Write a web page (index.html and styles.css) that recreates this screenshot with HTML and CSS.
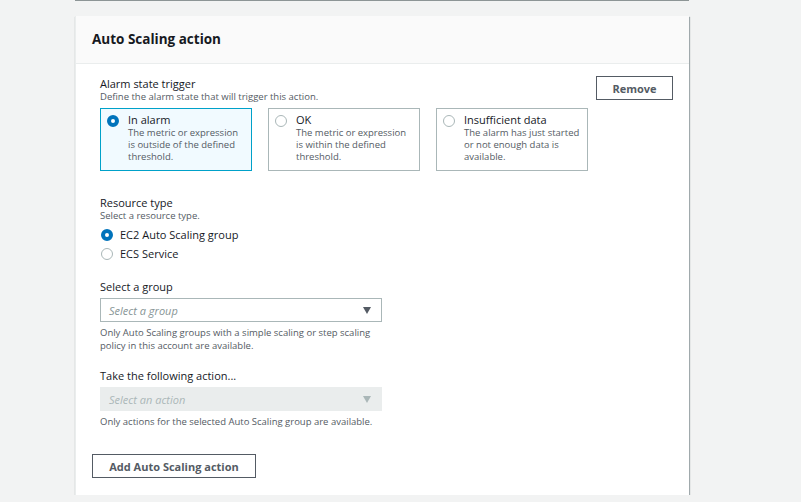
FILE: index.html
```html
<!DOCTYPE html>
<html lang="en">
<head>
<meta charset="utf-8">
<title>Auto Scaling action</title>
<link rel="stylesheet" href="styles.css">
</head>
<body>
<div class="page">
  <div class="prev-card"></div>
  <section class="card">
    <header class="card-head"><h2 class="card-title">Auto Scaling action</h2></header>
    <div class="card-body">
      <div class="top-row">
        <div class="field">
          <div class="label">Alarm state trigger</div>
          <div class="desc">Define the alarm state that will trigger this action.</div>
          <div class="tiles">
            <div class="tile selected">
              <span class="radio on"></span>
              <div class="tile-text">
                <div class="tile-title">In alarm</div>
                <div class="tile-desc">The metric or expression is outside of the defined threshold.</div>
              </div>
            </div>
            <div class="tile">
              <span class="radio"></span>
              <div class="tile-text">
                <div class="tile-title">OK</div>
                <div class="tile-desc">The metric or expression is within the defined threshold.</div>
              </div>
            </div>
            <div class="tile">
              <span class="radio"></span>
              <div class="tile-text">
                <div class="tile-title">Insufficient data</div>
                <div class="tile-desc">The alarm has just started or not enough data is available.</div>
              </div>
            </div>
          </div>
        </div>
        <button class="btn btn-remove">Remove</button>
      </div>

      <div class="field resource">
        <div class="label">Resource type</div>
        <div class="desc">Select a resource type.</div>
        <div class="radio-row first"><span class="radio on"></span><span class="radio-label">EC2 Auto Scaling group</span></div>
        <div class="radio-row"><span class="radio"></span><span class="radio-label">ECS Service</span></div>
      </div>

      <div class="field group">
        <div class="label">Select a group</div>
        <div class="select">
          <span class="placeholder">Select a group</span>
          <span class="caret"></span>
        </div>
        <div class="help">Only Auto Scaling groups with a simple scaling or step scaling policy in this account are available.</div>
      </div>

      <div class="field action">
        <div class="label">Take the following action...</div>
        <div class="select disabled">
          <span class="placeholder">Select an action</span>
          <span class="caret"></span>
        </div>
        <div class="help">Only actions for the selected Auto Scaling group are available.</div>
      </div>

      <button class="btn btn-add">Add Auto Scaling action</button>
    </div>
  </section>
</div>
</body>
</html>
```

FILE: styles.css
```css
* { box-sizing: border-box; }
html, body { margin: 0; padding: 0; }
body {
  background: #f2f3f3;
  font-family: "Open Sans", "Noto Sans", sans-serif;
  color: #16191f;
}
.page {
  width: 614px;
  margin-left: 75px;
}
.prev-card {
  height: 1px;
  background: #8d9596;
}
.card {
  margin-top: 15px;
  background: #fff;
  border-left: 1px solid #eaeded;
  box-shadow: 1px 1px 1px 0 rgba(0, 28, 36, 0.3), 0 1px 1px 0 rgba(0, 28, 36, 0.3);
}
.card-head {
  background: #fafafa;
  border-bottom: 1px solid #eaeded;
  height: 48px;
  padding: 0 16px 1px;
  display: flex;
  align-items: center;
}
.card-title {
  margin: 0;
  font-size: 13.5px;
  font-weight: 700;
  color: #16191f;
}
.card-body {
  padding: 12px 16px 17px 24px;
}
.top-row {
  display: flex;
  justify-content: space-between;
  align-items: flex-start;
}
.label {
  font-size: 11px;
  line-height: 15px;
  color: #16191f;
}
.desc {
  font-size: 9.5px;
  line-height: 12px;
  color: #545b64;
}
.tiles {
  display: flex;
  gap: 16px;
  margin-top: 5px;
}
.tile {
  width: 152px;
  height: 63px;
  border: 1px solid #aab7b8;
  padding: 4px 6px 5px;
  display: flex;
  gap: 8px;
}
.tile.selected {
  background: #f1faff;
  border-color: #00a1c9;
}
.radio {
  flex: none;
  width: 12px;
  height: 12px;
  border-radius: 50%;
  border: 1px solid #aab7b8;
  background: #fff;
  margin-top: 2px;
}
.radio.on {
  border: 4px solid #0073bb;
}
.tile-text { padding-left: 1px; }
.tile-title {
  font-size: 11px;
  line-height: 14px;
}
.tile-desc {
  font-size: 9.5px;
  line-height: 12px;
  color: #545b64;
}
.btn {
  font-family: inherit;
  font-size: 11px;
  font-weight: 700;
  color: #545b64;
  background: #fff;
  border: 1px solid #545b64;
  padding: 0;
  cursor: pointer;
}
.btn-remove {
  width: 77px;
  height: 24px;
}
.resource { margin-top: 24px; }
.radio-row {
  display: flex;
  align-items: center;
  height: 19px;
  gap: 7px;
  padding-left: 1px;
}
.radio-row.first { margin-top: 3px; }
.resource .radio { margin-top: 0; }
.radio-label { font-size: 11px; }
.group { margin-top: 16px; }
.select {
  margin-top: 4px;
  width: 282px;
  height: 24px;
  border: 1px solid #aab7b8;
  display: flex;
  align-items: center;
  justify-content: space-between;
  padding: 0 10px 0 8px;
}
.placeholder {
  font-size: 11px;
  font-style: italic;
  color: #879596;
}
.caret {
  width: 0;
  height: 0;
  border-left: 4.5px solid transparent;
  border-right: 4.5px solid transparent;
  border-top: 7px solid #545b64;
}
.select.disabled {
  background: #eaeded;
  border-color: #eaeded;
}
.select.disabled .placeholder { color: #aab7b8; }
.select.disabled .caret { border-top-color: #aab7b8; }
.help {
  margin-top: 4px;
  font-size: 9.5px;
  line-height: 13px;
  color: #545b64;
  width: 290px;
}
.action { margin-top: 16px; }
.btn-add {
  display: block;
  margin-top: 26px;
  margin-left: -8px;
  width: 164px;
  height: 24px;
}
```
